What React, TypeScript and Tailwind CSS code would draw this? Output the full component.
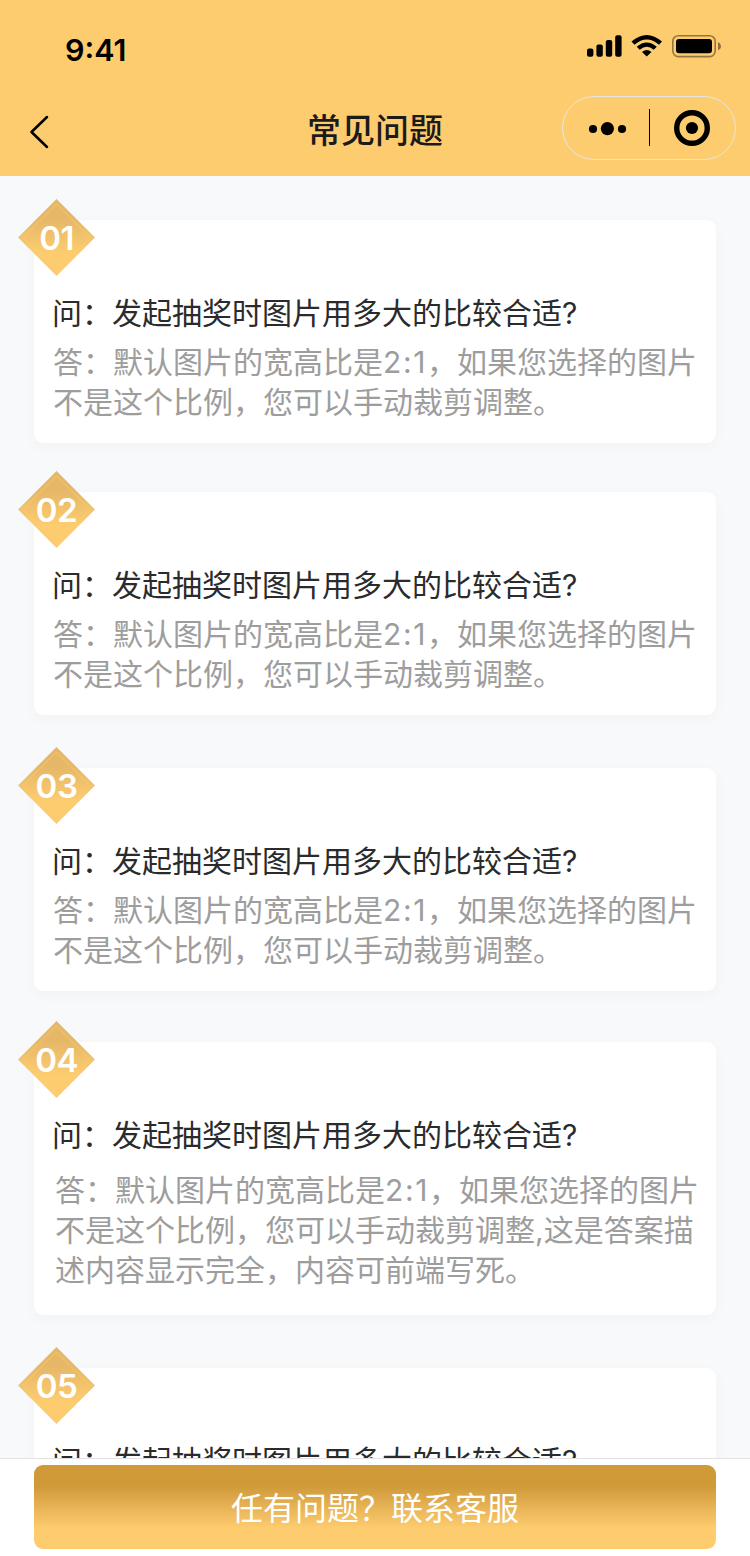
type Faq = { no: string; lines: string[]; card: string; answer: string };

const QUESTION = '问：发起抽奖时图片用多大的比较合适?';
const SHORT = ['答：默认图片的宽高比是2:1，如果您选择的图片', '不是这个比例，您可以手动裁剪调整。'];
const LONG = [
  '答：默认图片的宽高比是2:1，如果您选择的图片',
  '不是这个比例，您可以手动裁剪调整,这是答案描',
  '述内容显示完全，内容可前端写死。',
];

const faqs: Faq[] = [
  { no: '01', lines: SHORT, card: 'mt-[44px] h-[223px]', answer: 'mt-[9px]' },
  { no: '02', lines: SHORT, card: 'mt-[49px] h-[223px]', answer: 'mt-[9px]' },
  { no: '03', lines: SHORT, card: 'mt-[53px] h-[223px]', answer: 'mt-[9px]' },
  { no: '04', lines: LONG, card: 'mt-[51px] h-[273px]', answer: 'mt-[15px] pl-[2px]' },
  { no: '05', lines: [], card: 'mt-[53px] h-[223px]', answer: 'mt-[9px]' },
];

function StatusIcons() {
  return (
    <svg width="136" height="24" viewBox="586 34 136 24">
      <rect x="587" y="48.5" width="6.4" height="8.3" rx="2" />
      <rect x="596.4" y="44.5" width="6.4" height="12.3" rx="2" />
      <rect x="605.8" y="40" width="6.4" height="16.8" rx="2" />
      <rect x="615.2" y="35.2" width="6.4" height="21.6" rx="2" />
      <path d="M631.5 41.6 Q646.7 28.2 662 41.6 L659 44.8 Q646.7 34 634.5 44.8Z" />
      <path d="M636.7 46.8 Q646.7 38 656.8 46.8 L653.7 49.8 Q646.7 43.8 639.8 49.8Z" />
      <path d="M642 51.9 Q646.7 47.9 651.5 51.9 L646.7 56.6Z" />
      <rect x="672.8" y="35.8" width="42.4" height="20.8" rx="5.5" fill="none" stroke="#000" strokeOpacity=".42" strokeWidth="1.6" />
      <rect x="676" y="39" width="36" height="14.3" rx="3" />
      <path d="M718 42 Q721 43.5 721 46.2 Q721 49 718 50.3Z" fillOpacity=".45" />
    </svg>
  );
}

function Header() {
  return (
    <header className="h-[176px] shrink-0 bg-[#fdcc6f]">
      <div className="flex h-[96px] items-start justify-between pl-[65px] pr-[28px]">
        <span className="mt-[30px] font-['Inter'] text-[30.5px] leading-[40px] font-semibold text-black">9:41</span>
        <div className="mt-[34px]">
          <StatusIcons />
        </div>
      </div>
      <div className="grid h-[64px] grid-cols-[188px_1fr_188px] items-center">
        <svg className="ml-[28px] mt-[8px]" width="24" height="36" viewBox="0 0 24 36" fill="none" stroke="#000" strokeWidth="2.5" strokeLinecap="round" strokeLinejoin="round">
          <path d="M19 3 L3.5 18 L19 33" />
        </svg>
        <h1 className="mt-[6px] text-center text-[34px] leading-[48px] font-medium text-[#1b1b1b]">常见问题</h1>
        <div className="flex h-[64px] w-[174px] items-center rounded-full border border-[#e8e6df]">
          <svg width="172" height="62" viewBox="563 97 172 62">
            <circle cx="593" cy="129" r="4.1" />
            <circle cx="607.4" cy="128.6" r="6.6" />
            <circle cx="622" cy="129" r="4.1" />
            <rect x="649" y="109" width="1" height="37" />
            <circle cx="692" cy="128" r="15.3" fill="none" stroke="#000" strokeWidth="5.4" />
            <circle cx="692" cy="128" r="6.1" />
          </svg>
        </div>
      </div>
    </header>
  );
}

function Badge({ no }: { no: string }) {
  return (
    <div className="absolute -left-[16px] -top-[21px] flex h-[77px] w-[77px] items-center justify-center">
      <svg className="absolute inset-0" width="77" height="77" viewBox="0 0 77 77">
        <defs>
          <linearGradient id={`fill-${no}`} x1="0" y1="0" x2="0" y2="1">
            <stop offset=".25" stopColor="#e5b767" />
            <stop offset=".7" stopColor="#fdcc6f" />
          </linearGradient>
        </defs>
        <path d="M38.5 0 L77 38.5 L38.5 77 L0 38.5Z" fill={`url(#fill-${no})`} />
        <path d="M38.5 5 L72 38.5 L38.5 72 L5 38.5Z" fill="none" stroke="#fdcc6f" strokeOpacity=".8" strokeWidth="1" />
      </svg>
      <span className="relative pt-[2px] font-['Inter'] text-[33px] leading-none font-semibold tracking-[-0.5px] text-white">{no}</span>
    </div>
  );
}

function Line({ text }: { text: string }) {
  const [before, after] = text.split('2:1');
  return (
    <p>
      {before}
      {after !== undefined && <span className="tracking-[1.6px]">2:1</span>}
      {after}
    </p>
  );
}

function Card({ faq }: { faq: Faq }) {
  return (
    <section className={`relative mx-[34px] shrink-0 rounded-[9px] bg-white pl-[19px] pt-[73px] shadow-[0_4px_14px_rgba(0,0,0,0.03)] ${faq.card}`}>
      <Badge no={faq.no} />
      <h2 className="-ml-px text-[30px] leading-[40px] whitespace-nowrap text-[#2b2b2b]">{QUESTION}</h2>
      <div className={`text-[30px] leading-[40px] whitespace-nowrap text-[#9d9d9d] ${faq.answer}`}>
        {faq.lines.map((line) => (
          <Line key={line} text={line} />
        ))}
      </div>
    </section>
  );
}

export default function App() {
  return (
    <div className="flex h-[1556px] w-[750px] flex-col overflow-hidden bg-[#f8f9fb] font-['Inter','Noto_Sans_CJK_SC',sans-serif]">
      <Header />
      <main className="flex min-h-0 flex-1 flex-col overflow-hidden">
        {faqs.map((faq) => (
          <Card key={faq.no} faq={faq} />
        ))}
      </main>
      <footer className="h-[98px] shrink-0 border-t border-[#e2e2e2] bg-white px-[34px] pt-[6px]">
        <button className="flex h-[84px] w-full items-center justify-center rounded-[9px] bg-linear-to-b from-[#d09a39] from-25% to-[#fdcc6f] to-75% pt-[3px] text-[32px] leading-[44px] text-white">
          任有问题？联系客服
        </button>
      </footer>
    </div>
  );
}
